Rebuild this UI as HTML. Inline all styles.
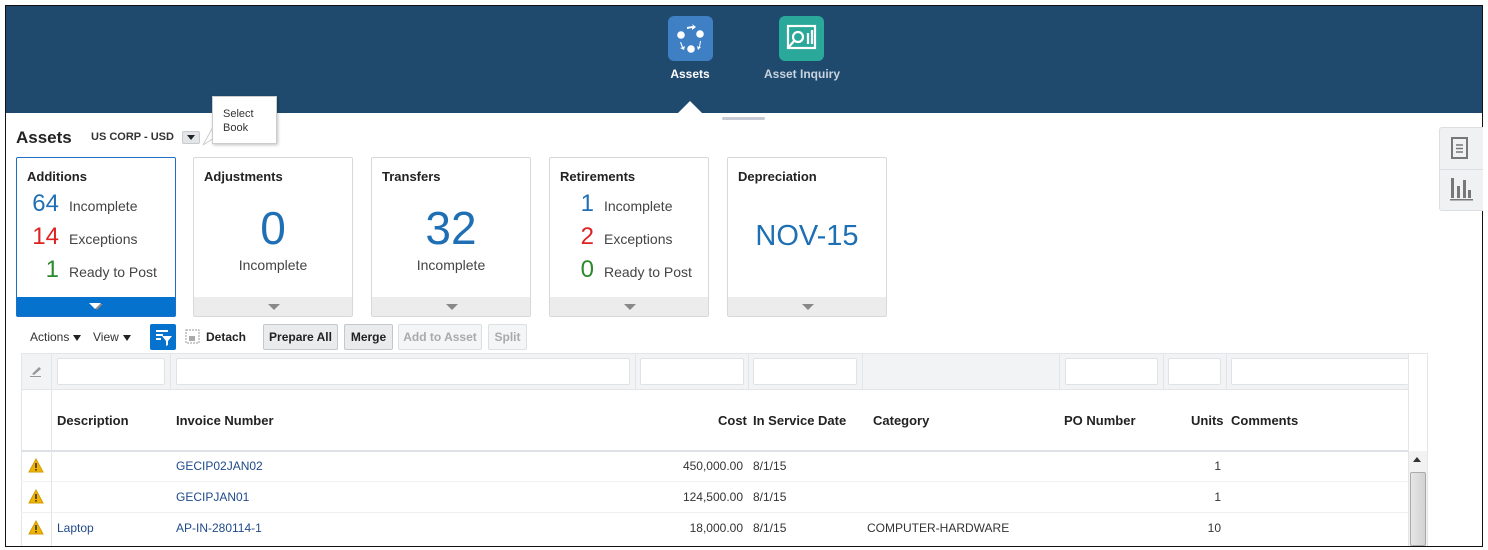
<!DOCTYPE html>
<html><head><style>
*{box-sizing:border-box;margin:0;padding:0}
body{width:1488px;height:550px;background:#fff;font-family:"Liberation Sans",Arial,sans-serif;position:relative;overflow:hidden;color:#333}
.a{position:absolute}
.frame{left:5px;top:5px;width:1478px;height:542px;border:1px solid #111}
.hdr{left:6px;top:6px;width:1476px;height:107px;background:#1f4a6e}
.card{position:absolute;top:157px;width:160px;height:160px;border:1px solid #d6d9dc;border-radius:2px;background:#fff}
.card h3{position:absolute;left:10px;top:11px;font-size:13px;font-weight:bold;color:#222}
.card .bar{position:absolute;left:0;right:0;bottom:0;height:19px;background:#ececec}
.card .bar:after{content:"";position:absolute;left:74px;top:7px;border-left:6px solid transparent;border-right:6px solid transparent;border-top:6px solid #888}
.row{position:absolute;left:0;font-size:14px;color:#444}
.row b{font-weight:normal;font-size:24px;display:inline-block;width:44px;text-align:right;margin-right:10px}
.big{position:absolute;left:0;width:100%;text-align:center}
.btn{position:absolute;top:324px;height:26px;border:1px solid #c4c8cc;border-radius:2px;background:#e9ebed;font-size:12px;font-weight:bold;color:#222;text-align:center;line-height:24px}
.dis{color:#aaa;background:#f4f5f6;border-color:#dde0e2}
.t{position:absolute;font-size:12px}
.th{font-weight:bold;font-size:13px;color:#222;top:413px}
.inp{position:absolute;top:358px;height:27px;background:#fff;border:1px solid #dfe3e6;border-radius:2px}
.vl{position:absolute;width:1px;background:#e3e6e9}
.hl{position:absolute;height:1px;background:#e3e6e9}
.lk{color:#1f4a8a}
</style></head><body>
<div class="a hdr"></div>
<div class="a frame"></div>
<div class="a" style="left:668px;top:16px;width:45px;height:45px;border-radius:6px;background:#3f7fc4"></div>
<svg class="a" style="left:668px;top:16px" width="45" height="45"><g fill="#fff"><circle cx="13" cy="19" r="3.8"/><circle cx="32" cy="18" r="3.8"/><circle cx="23" cy="33" r="3.8"/><path d="M19 11 l6 -1 l-1 -2 l4 3 l-4 3 l0 -2 l-5 1z"/><path d="M13 26 l2 5 l2 -1 l-1 4 l-4 -2 l2 -0.5 l-2 -5z"/><path d="M32 25 l-1 6 l-2 -1 l1 4 l3 -3 l-1 0 l1 -6z"/></g></svg>
<div class="a" style="left:779px;top:16px;width:45px;height:45px;border-radius:6px;background:#2aa89a"></div>
<svg class="a" style="left:779px;top:16px" width="45" height="45"><g fill="none" stroke="#fff" stroke-width="2.2"><rect x="9" y="10" width="27" height="22"/><circle cx="19" cy="21" r="5"/><path d="M15 25 l-6 7"/><path d="M29 17 v11 M33 14 v14"/></g></svg>
<div class="a" style="left:670px;top:67px;width:40px;text-align:center;color:#fff;font-size:12px;font-weight:bold">Assets</div>
<div class="a" style="left:760px;top:67px;width:84px;text-align:center;color:#c8d3de;font-size:12px;font-weight:bold">Asset Inquiry</div>
<div class="a" style="left:678px;top:101px;border-left:12px solid transparent;border-right:12px solid transparent;border-bottom:12px solid #fff"></div>
<div class="a" style="left:722px;top:117px;width:43px;height:3px;border-radius:2px;background:#c6cad4"></div>
<div class="a" style="left:16px;top:128px;font-size:17px;font-weight:bold;color:#222">Assets</div>
<div class="a" style="left:91px;top:131px;font-size:11px;font-weight:bold;color:#333">US CORP - USD</div>
<div class="a" style="left:182px;top:131px;width:18px;height:13px;background:#e3e5e8;border:1px solid #c8cbce;border-radius:2px"></div>
<div class="a" style="left:187px;top:135px;border-left:4px solid transparent;border-right:4px solid transparent;border-top:5px solid #222"></div>
<svg class="a" style="left:200px;top:125px" width="20" height="22"><path d="M13 2 L3 20 L19 10" fill="#fff" stroke="#ccc"/></svg>
<div class="a" style="left:212px;top:96px;width:65px;height:48px;background:#fff;border:1px solid #ccc;box-shadow:1px 1px 3px rgba(0,0,0,.25);font-size:11px;color:#333;padding:10px 0 0 10px;line-height:14px">Select<br>Book</div>
<div class="card" style="left:16px;border-color:#1f6fc6">
<h3>Additions</h3>
<div class="row" style="top:32px"><b style="color:#1f6fb4;width:42px">64</b>Incomplete</div>
<div class="row" style="top:65px"><b style="color:#d22;width:42px">14</b>Exceptions</div>
<div class="row" style="top:98px"><b style="color:#2b8a2b;width:42px">1</b>Ready to Post</div>
<div class="bar" style="background:#0572ce"></div>
</div>
<div class="a" style="left:89px;top:303px;border-left:6px solid transparent;border-right:6px solid transparent;border-top:6px solid #fff"></div>
<div class="card" style="left:193px"><h3>Adjustments</h3><div class="big" style="top:43px;font-size:46px;color:#1f6fb4">0</div><div class="big" style="top:99px;font-size:14px;color:#444">Incomplete</div><div class="bar"></div></div>
<div class="card" style="left:371px"><h3>Transfers</h3><div class="big" style="top:43px;font-size:46px;color:#1f6fb4">32</div><div class="big" style="top:99px;font-size:14px;color:#444">Incomplete</div><div class="bar"></div></div>
<div class="card" style="left:549px"><h3>Retirements</h3>
<div class="row" style="top:32px"><b style="color:#1f6fb4">1</b>Incomplete</div>
<div class="row" style="top:65px"><b style="color:#d22">2</b>Exceptions</div>
<div class="row" style="top:98px"><b style="color:#2b8a2b">0</b>Ready to Post</div>
<div class="bar"></div></div>
<div class="card" style="left:727px"><h3>Depreciation</h3><div class="big" style="top:62px;font-size:29px;color:#1f6fb4">NOV-15</div><div class="bar"></div></div>
<div class="a" style="left:1439px;top:127px;width:44px;height:84px;background:#f0f1f2;border:1px solid #dcdfe2;border-right:none;border-radius:3px 0 0 3px"></div>
<div class="a" style="left:1439px;top:169px;width:44px;height:1px;background:#dcdfe2"></div>
<svg class="a" style="left:1450px;top:136px" width="22" height="26"><rect x="2" y="2" width="15" height="20" fill="none" stroke="#777" stroke-width="2"/><path d="M6 9h7M6 12.5h7M6 16h7" stroke="#777" stroke-width="1.5"/></svg>
<svg class="a" style="left:1448px;top:175px" width="26" height="28"><g fill="#777"><rect x="3" y="3" width="3" height="20"/><rect x="9" y="11" width="3" height="12"/><rect x="15" y="5" width="3" height="18"/><rect x="20" y="15" width="3" height="8"/><rect x="2" y="24" width="23" height="1.5"/></g></svg>
<div class="t" style="left:30px;top:330px;color:#333">Actions</div>
<div class="a" style="left:73px;top:335px;border-left:4.5px solid transparent;border-right:4.5px solid transparent;border-top:6px solid #222"></div>
<div class="t" style="left:93px;top:330px;color:#333">View</div>
<div class="a" style="left:123px;top:335px;border-left:4.5px solid transparent;border-right:4.5px solid transparent;border-top:6px solid #222"></div>
<div class="a" style="left:150px;top:324px;width:26px;height:26px;background:#0572ce;border-radius:2px"></div>
<svg class="a" style="left:150px;top:324px" width="26" height="26"><g fill="#fff"><rect x="6" y="6" width="12" height="2"/><rect x="6" y="10" width="7" height="2"/><rect x="6" y="14" width="5" height="2"/><path d="M12 12h10l-4 5v4l-2 1v-5z"/></g></svg>
<svg class="a" style="left:185px;top:329px" width="16" height="16"><rect x="1" y="1" width="13" height="13" fill="none" stroke="#999" stroke-dasharray="2 1"/><rect x="4" y="7" width="6" height="5" fill="#aaa"/></svg>
<div class="t" style="left:206px;top:330px;font-weight:bold;color:#222">Detach</div>
<div class="btn" style="left:263px;width:75px">Prepare All</div>
<div class="btn" style="left:344px;width:49px">Merge</div>
<div class="btn dis" style="left:398px;width:84px">Add to Asset</div>
<div class="btn dis" style="left:488px;width:39px">Split</div>
<div class="a" style="left:21px;top:353px;width:1387px;height:37px;background:#f1f3f5"></div>
<div class="a" style="left:21px;top:353px;width:1407px;height:193px;border:1px solid #e3e6e9;border-bottom:none"></div>
<div class="hl" style="left:21px;top:389px;width:1387px"></div>
<div class="hl" style="left:21px;top:450px;width:1387px;background:#dde1e5;height:2px"></div>
<div class="hl" style="left:21px;top:481px;width:1387px;background:#eef0f2"></div>
<div class="hl" style="left:21px;top:512px;width:1387px;background:#eef0f2"></div>
<div class="vl" style="left:51px;top:353px;height:193px"></div>
<div class="vl" style="left:170px;top:353px;height:37px"></div>
<div class="vl" style="left:635px;top:353px;height:37px"></div>
<div class="vl" style="left:748px;top:353px;height:37px"></div>
<div class="vl" style="left:862px;top:353px;height:37px"></div>
<div class="vl" style="left:1059px;top:353px;height:37px"></div>
<div class="vl" style="left:1163px;top:353px;height:37px"></div>
<div class="vl" style="left:1226px;top:353px;height:37px"></div>
<div class="vl" style="left:1408px;top:353px;height:193px"></div>
<div class="inp" style="left:57px;width:108px"></div>
<div class="inp" style="left:176px;width:454px"></div>
<div class="inp" style="left:640px;width:104px"></div>
<div class="inp" style="left:753px;width:104px"></div>
<div class="inp" style="left:1065px;width:93px"></div>
<div class="inp" style="left:1168px;width:53px"></div>
<div class="inp" style="left:1231px;width:177px;border-right:none"></div>
<svg class="a" style="left:29px;top:364px" width="14" height="14"><path d="M3 10 L10 3 L12 5 L5 11z" fill="#999"/><path d="M1 12.5h11" stroke="#999"/></svg>
<div class="t th" style="left:57px">Description</div>
<div class="t th" style="left:176px">Invoice Number</div>
<div class="t th" style="left:718px">Cost</div>
<div class="t th" style="left:753px">In Service Date</div>
<div class="t th" style="left:873px">Category</div>
<div class="t th" style="left:1064px">PO Number</div>
<div class="t th" style="left:1191px">Units</div>
<div class="t th" style="left:1231px">Comments</div>
<svg class="a" style="left:28px;top:458px" width="16" height="15"><path d="M8 1 L15 14 H1z" fill="#f0b400" stroke="#d49a00"/><rect x="7.2" y="5" width="1.6" height="5" fill="#333"/><rect x="7.2" y="11" width="1.6" height="1.6" fill="#333"/></svg>
<svg class="a" style="left:28px;top:489px" width="16" height="15"><path d="M8 1 L15 14 H1z" fill="#f0b400" stroke="#d49a00"/><rect x="7.2" y="5" width="1.6" height="5" fill="#333"/><rect x="7.2" y="11" width="1.6" height="1.6" fill="#333"/></svg>
<svg class="a" style="left:28px;top:520px" width="16" height="15"><path d="M8 1 L15 14 H1z" fill="#f0b400" stroke="#d49a00"/><rect x="7.2" y="5" width="1.6" height="5" fill="#333"/><rect x="7.2" y="11" width="1.6" height="1.6" fill="#333"/></svg>
<div class="t lk" style="left:176px;top:459px">GECIP02JAN02</div>
<div class="t lk" style="left:176px;top:490px">GECIPJAN01</div>
<div class="t lk" style="left:57px;top:521px">Laptop</div>
<div class="t lk" style="left:176px;top:521px">AP-IN-280114-1</div>
<div class="t" style="left:640px;width:103px;text-align:right;top:459px">450,000.00</div>
<div class="t" style="left:640px;width:103px;text-align:right;top:490px">124,500.00</div>
<div class="t" style="left:640px;width:103px;text-align:right;top:521px">18,000.00</div>
<div class="t" style="left:753px;top:459px">8/1/15</div>
<div class="t" style="left:753px;top:490px">8/1/15</div>
<div class="t" style="left:753px;top:521px">8/1/15</div>
<div class="t" style="left:867px;top:521px">COMPUTER-HARDWARE</div>
<div class="t" style="left:1168px;width:53px;text-align:right;top:459px">1</div>
<div class="t" style="left:1168px;width:53px;text-align:right;top:490px">1</div>
<div class="t" style="left:1168px;width:53px;text-align:right;top:521px">10</div>
<div class="a" style="left:1409px;top:451px;width:18px;height:95px;background:#f2f2f2"></div>
<div class="a" style="left:1413px;top:457px;border-left:4px solid transparent;border-right:4px solid transparent;border-bottom:5px solid #333"></div>
<div class="a" style="left:1410px;top:472px;width:16px;height:74px;background:linear-gradient(90deg,#e6e6e6,#d2d2d2);border:1px solid #aaa;border-radius:2px"></div>
</body></html>
